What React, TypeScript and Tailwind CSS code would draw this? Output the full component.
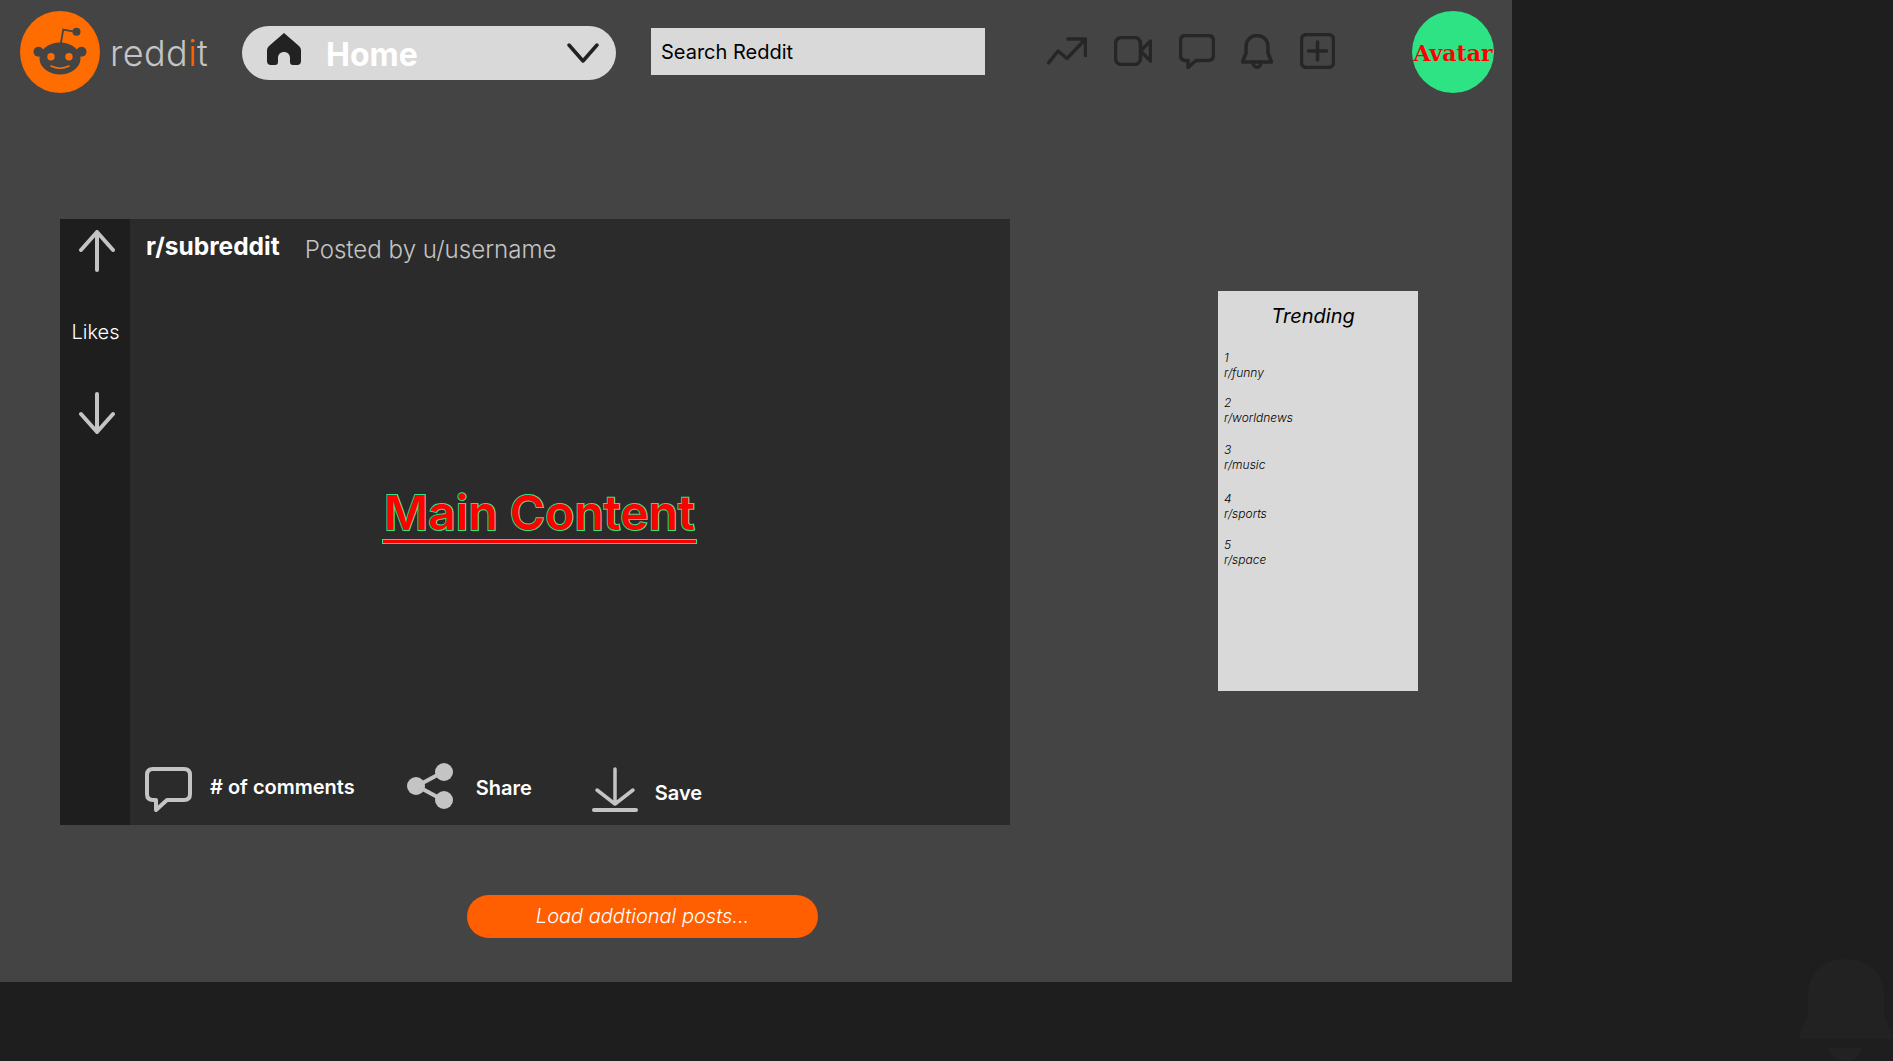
import React from "react";

const iconStroke = "#262626";
const grey = "#c4c4c4";

function Logo() {
  return (
    <svg width="80" height="82" viewBox="0 0 80 82" className="shrink-0">
      <ellipse cx="40" cy="41" rx="40" ry="41" fill="#ff6d00" />
      <path d="M40.7 33 L43.3 18.5 L54 20.7" fill="none" stroke="#444" strokeWidth="1.8" />
      <circle cx="56.5" cy="20.7" r="4" fill="#444" />
      <circle cx="18.5" cy="40.7" r="5" fill="#444" />
      <circle cx="61.5" cy="40.7" r="5" fill="#444" />
      <ellipse cx="40" cy="47.5" rx="20.5" ry="16" fill="#444" />
      <circle cx="31" cy="45.7" r="3.7" fill="#ff6d00" />
      <circle cx="49" cy="45.7" r="3.7" fill="#ff6d00" />
      <path d="M31 55 Q40 59.5 49 55" fill="none" stroke="#ff6d00" strokeWidth="1.6" strokeLinecap="round" />
    </svg>
  );
}

function HeaderIcons() {
  const p = { fill: "none", stroke: iconStroke, strokeWidth: 3.5, strokeLinecap: "round" as const, strokeLinejoin: "round" as const };
  return (
    <div className="flex items-center gap-[26.75px] ml-[62px] mt-[-2px]">
      <svg width="40" height="28" viewBox="0 0 40 28">
        <path d="M1.5 26 L11 14 L20 21.5 L38.5 2 M21 2 H38.5 V18.5" {...p} />
      </svg>
      <svg width="38" height="30" viewBox="0 0 38 30">
        <rect x="1.5" y="1.5" width="25" height="27" rx="6" {...p} />
        <path d="M26.5 15 L36.5 5 V25 Z" {...p} />
      </svg>
      <svg width="36" height="35" viewBox="0 0 36 35">
        <path d="M7 1.5 H29 Q34.5 1.5 34.5 7 V21 Q34.5 26.5 29 26.5 H17 L9 33.5 V26.5 H7 Q1.5 26.5 1.5 21 V7 Q1.5 1.5 7 1.5 Z" {...p} />
      </svg>
      <svg width="32" height="35" viewBox="0 0 32 35">
        <path d="M1.5 28 L5 19 V13 C5 6 9.5 1.5 16 1.5 C22.5 1.5 27 6 27 13 V19 L30.5 28 Z" {...p} />
        <path d="M12 28 C12 35 20 35 20 28" {...p} />
      </svg>
      <svg width="35" height="36" viewBox="0 0 35 36">
        <rect x="1.5" y="1.5" width="32" height="33" rx="5" {...p} />
        <path d="M17.5 9 V27 M8.5 18 H26.5" {...p} />
      </svg>
    </div>
  );
}

function Header() {
  return (
    <header className="flex items-center h-[104px] pl-5">
      <Logo />
      <div className="ml-[10px] w-[98px] text-[36px] font-light text-[#c4c4c4] leading-none tracking-[0.4px] mt-[1px] whitespace-nowrap">
        redd<span className="text-[#ff6000]">i</span>t
      </div>
      <div className="ml-[34px] flex items-center w-[374px] h-[54px] rounded-[27px] bg-[#d9d9d9] mt-[2px] pl-[25px] pr-[17px]">
        <svg width="34" height="32" viewBox="0 0 34 32" className="mt-[-8px] shrink-0">
          <path d="M17 0 L32 13 Q34 15 34 17 V28 Q34 32 30 32 H26 Q23 32 23 29 V25 C23 17 11 17 11 25 V29 Q11 32 8 32 H4 Q0 32 0 28 V17 Q0 15 2 13 Z" fill="#222" />
        </svg>
        <span className="ml-[25px] text-[32px] font-bold text-white leading-none mt-[3px]">Home</span>
        <svg width="32" height="22" viewBox="0 0 32 22" className="ml-auto shrink-0">
          <path d="M2 3 L16 19 L30 3" fill="none" stroke="#222" strokeWidth="3.5" strokeLinecap="round" strokeLinejoin="round" />
        </svg>
      </div>
      <div className="ml-[35px] w-[334px] h-[47px] bg-[#d9d9d9] flex items-center pl-[10px] text-[20px] text-black mt-[-1px]">
        Search Reddit
      </div>
      <HeaderIcons />
      <div className="ml-[77px] w-[82px] h-[82px] rounded-full bg-[#2de384] flex items-center justify-center overflow-visible">
        <span className="font-['DejaVu_Serif',serif] font-bold text-[22px] text-[#ff0000] whitespace-nowrap mt-[2px]">Avatar</span>
      </div>
    </header>
  );
}

function VoteRail() {
  const p = { fill: "none", stroke: grey, strokeWidth: 4, strokeLinecap: "round" as const, strokeLinejoin: "round" as const };
  return (
    <aside className="w-[70px] bg-[#1e1e1e] flex flex-col items-center pt-[11px] pl-[3px] shrink-0">
      <svg width="36" height="42" viewBox="0 0 36 42">
        <path d="M18 40 V2 M2 20 L18 2 L34 20" {...p} />
      </svg>
      <div className="mt-[48px] text-[20px] font-light text-white leading-6 mr-[2px]">Likes</div>
      <svg width="36" height="42" viewBox="0 0 36 42" className="mt-[48px]">
        <path d="M18 2 V40 M2 22 L18 40 L34 22" {...p} />
      </svg>
    </aside>
  );
}

function Actions() {
  return (
    <div className="flex items-start text-[20px] font-semibold text-white leading-6 pl-[15px] pb-[13px]">
      <svg width="47" height="45" viewBox="0 0 47 45" className="shrink-0 mt-[4px]">
        <path d="M8 2 H39 Q45 2 45 8 V27 Q45 33 39 33 H22 L11 43 V33 H8 Q2 33 2 27 V8 Q2 2 8 2 Z" fill="none" stroke={grey} strokeWidth="4" strokeLinejoin="round" />
      </svg>
      <span className="ml-[18px] mt-[12px] whitespace-nowrap">{"# of comments"}</span>
      <svg width="46" height="46" viewBox="0 0 46 46" className="ml-[52px] shrink-0">
        <path d="M36 9 L10 23 L36 37" fill="none" stroke={grey} strokeWidth="4" />
        <circle cx="37" cy="9" r="9" fill={grey} />
        <circle cx="9" cy="23" r="9" fill={grey} />
        <circle cx="37" cy="37" r="9" fill={grey} />
      </svg>
      <span className="ml-[23px] mt-[13px]">Share</span>
      <svg width="46" height="45" viewBox="0 0 46 45" className="ml-[60px] shrink-0 mt-[4px]">
        <path d="M23 2 V36 M5 23 L23 37 L41 23" fill="none" stroke={grey} strokeWidth="3.5" strokeLinecap="round" strokeLinejoin="round" />
        <path d="M2 43 H44" fill="none" stroke={grey} strokeWidth="4" strokeLinecap="round" />
      </svg>
      <span className="ml-[17px] mt-[18px]">Save</span>
    </div>
  );
}

function Post() {
  return (
    <article className="flex w-[950px] h-[606px] bg-[#2b2b2b] shrink-0">
      <VoteRail />
      <div className="flex-1 flex flex-col">
        <div className="flex items-start pl-4 pt-[13px]">
          <span className="text-[24.5px] font-bold text-white leading-[29px]">r/subreddit</span>
          <span className="ml-[25px] mt-[3px] text-[24.1px] font-light text-[#c4c4c4] leading-[29px]">Posted by u/username</span>
        </div>
        <div className="flex-1 flex items-center justify-center pb-[3px]">
          <div className="flex flex-col items-center mr-[61px]">
            <span className="text-[48px] font-semibold leading-[60px] text-[#ff0000] [-webkit-text-stroke:2px_#2de384] [paint-order:stroke_fill] whitespace-nowrap mt-[2px]">
              Main Content
            </span>
            <div className="w-[315px] h-[5px] bg-[#ff0000] border border-[#2de384] mt-[-4px]" />
          </div>
        </div>
        <Actions />
      </div>
    </article>
  );
}

const trending: [string, string, string][] = [
  ["1", "r/funny", "mt-0"],
  ["2", "r/worldnews", "mt-[15px]"],
  ["3", "r/music", "mt-[17px]"],
  ["4", "r/sports", "mt-[19px]"],
  ["5", "r/space", "mt-[16px]"],
];

function Trending() {
  return (
    <aside className="ml-[208px] mt-[72px] w-[200px] h-[400px] bg-[#d9d9d9] text-black italic shrink-0">
      <div className="text-[20px] leading-6 text-center pt-[13px] pr-[10px]">Trending</div>
      <ol className="pl-[6px] pt-[22px] text-[12px] leading-[15px] font-light">
        {trending.map(([n, name, mt]) => (
          <li key={n} className={mt}>
            <div>{n}</div>
            <div>{name}</div>
          </li>
        ))}
      </ol>
    </aside>
  );
}

export default function App() {
  return (
    <div className="relative w-[1893px] h-[1061px] overflow-hidden bg-[#1e1e1e] font-['Inter',sans-serif]">
      <main className="w-[1512px] h-[982px] bg-[#444444]">
        <Header />
        <div className="flex pl-[60px] pt-[115px]">
          <Post />
          <Trending />
        </div>
        <button className="block ml-[467px] mt-[70px] w-[351px] h-[43px] pb-[2px] rounded-[22px] bg-[#ff5f00] text-white italic font-light text-[20px] leading-none">
          Load addtional posts...
        </button>
      </main>
      <svg width="95" height="102" viewBox="0 0 95 102" className="absolute left-[1798px] top-[959px]">
        <path d="M2 76 Q-1 80 3 80 L92 80 Q96 80 94 76 L86 55 L86 36 C86 14 70 0 48 0 C26 0 10 14 10 36 L10 55 Z M31 89 L63 89 C62 98 55 102 47 102 C39 102 32 98 31 89 Z" fill="#222222" />
      </svg>
    </div>
  );
}
